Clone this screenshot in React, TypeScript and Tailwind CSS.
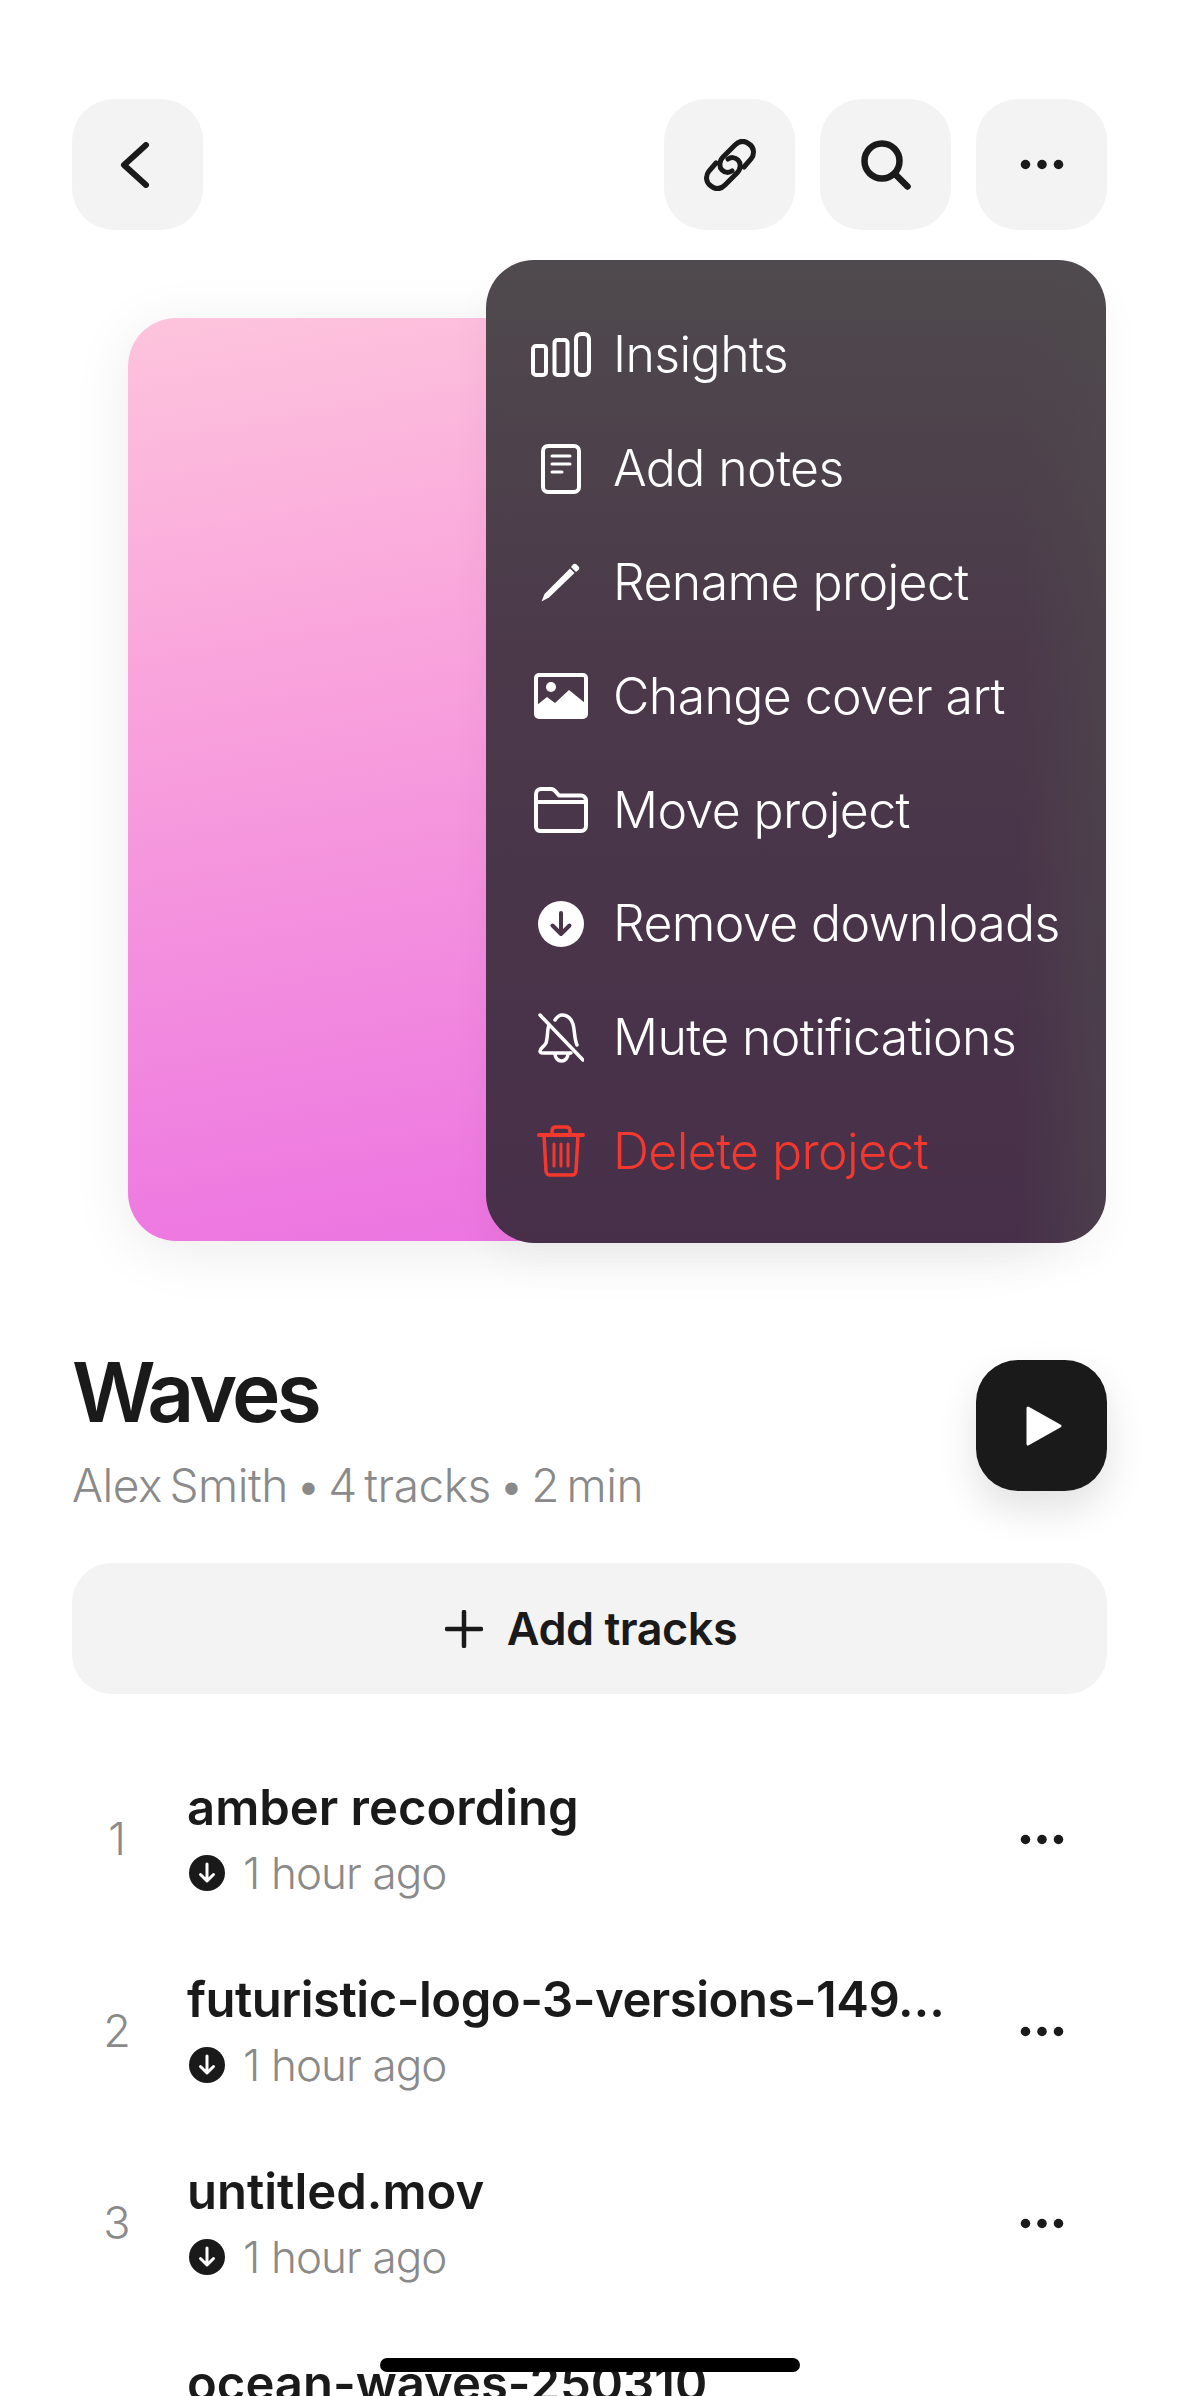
import type { ReactNode } from "react";

const Dots = ({ className = "" }: { className?: string }) => (
  <svg viewBox="0 0 48 12" className={className} fill="#1a1a1a">
    <circle cx="6" cy="6" r="5.2" />
    <circle cx="24" cy="6" r="5.2" />
    <circle cx="42" cy="6" r="5.2" />
  </svg>
);

const IconButton = ({ children }: { children: ReactNode }) => (
  <button className="flex h-[131px] w-[131px] items-center justify-center rounded-[42px] bg-[#f3f3f3]">
    {children}
  </button>
);

const stroke = {
  fill: "none",
  stroke: "currentColor",
  strokeLinecap: "round" as const,
  strokeLinejoin: "round" as const,
};

const menuItems: { label: string; danger?: boolean; icon: ReactNode }[] = [
  {
    label: "Insights",
    icon: (
      <svg viewBox="0 0 60 45" className="h-[45px] w-[60px] text-white" {...stroke} strokeWidth="4">
        <rect x="2" y="14" width="13" height="29" rx="3" />
        <rect x="23.500" y="8" width="13" height="35" rx="3" />
        <rect x="45" y="2" width="13" height="41" rx="5" />
      </svg>
    ),
  },
  {
    label: "Add notes",
    icon: (
      <svg viewBox="0 0 40 50" className="h-[50px] w-[40px] text-white" {...stroke} strokeWidth="4">
        <rect x="2" y="2" width="36" height="46" rx="5" />
        <path d="M11 12h18M11 20h18M11 28h10" strokeWidth="3" />
      </svg>
    ),
  },
  {
    label: "Rename project",
    icon: (
      <svg viewBox="0 0 40 40" className="h-[40px] w-[40px] text-white" fill="currentColor">
        <path d="M29 6.500 33.500 11 8 35.500 0.500 39.500 3.500 32Z" />
        <path d="M32 2.500c1-1 2.500-1 3.500 0l2 2c1 1 1 2.500 0 3.500l-2.500 2-5-5Z" />
      </svg>
    ),
  },
  {
    label: "Change cover art",
    icon: (
      <svg viewBox="0 0 54 46" className="h-[46px] w-[54px] text-white">
        <rect x="0" y="0" width="54" height="46" rx="5" fill="currentColor" />
        <rect x="4" y="4" width="46" height="34" rx="1" fill="#4b374a" />
        <circle cx="17" cy="14" r="5" fill="currentColor" />
        <path d="M3 32 13 24 21 30 35 17 51 30V40H3Z" fill="currentColor" />
      </svg>
    ),
  },
  {
    label: "Move project",
    icon: (
      <svg viewBox="0 0 54 46" className="h-[46px] w-[54px] text-white" {...stroke} strokeWidth="4">
        <path d="M2 40V7a5 5 0 0 1 5-5h10c2.500 0 3.500 1 5 3l3 3.500h22a5 5 0 0 1 5 5V39a5 5 0 0 1-5 5H6a4 4 0 0 1-4-4Z" />
        <path d="M2 15h50" />
      </svg>
    ),
  },
  {
    label: "Remove downloads",
    icon: (
      <svg viewBox="0 0 46 46" className="h-[46px] w-[46px] text-white">
        <circle cx="23" cy="23" r="23" fill="currentColor" />
        <path
          d="M23 12v21M14.500 24.500 23 33l8.500-8.500"
          fill="none"
          stroke="#4a3549"
          strokeWidth="4"
          strokeLinecap="round"
          strokeLinejoin="round"
        />
      </svg>
    ),
  },
  {
    label: "Mute notifications",
    icon: (
      <svg viewBox="0 0 46 50" className="h-[50px] w-[46px] text-white" {...stroke} strokeWidth="3.500">
        <path d="M2 2 45 47" />
        <path d="M11 12C9 16 10 25 8 30 6 34 2 35 2 38c0 1.500 1 2 3 2h28" />
        <path d="M17 7c2-3 4-5 7-5 5 0 9 3 11 9 2 7 1 14 4 21" />
        <path d="M17 41c0 4 3 7 6.500 7s6.500-3 6.500-7" />
      </svg>
    ),
  },
  {
    label: "Delete project",
    danger: true,
    icon: (
      <svg viewBox="0 0 48 52" className="h-[52px] w-[48px] text-[#f5382e]" {...stroke} strokeWidth="3.500">
        <path d="M2 10h44" strokeWidth="4" />
        <path d="M15 10V6c0-2.500 1.500-4 4-4h10c2.500 0 4 1.500 4 4v4" />
        <path d="M7 10l2 36c0 2.500 2 4 4 4h22c2 0 4-1.500 4-4l2-36" />
        <path d="M17 19v22M24 19v22M31 19v22" strokeWidth="3" />
      </svg>
    ),
  },
];

const tracks = [
  { title: "amber recording", tight: false },
  { title: "futuristic-logo-3-versions-149…", tight: true },
  { title: "untitled.mov", tight: false },
  { title: "ocean-waves-250310", tight: false },
];

const Track = ({ index, title, tight }: { index: number; title: string; tight: boolean }) => (
  <div className="flex h-[192px] items-center">
    <span className="mr-[25px] mb-[2px] w-[90px] shrink-0 text-center text-[45px] font-light text-[#8a8a8a]">{index}</span>
    <div className="min-w-0 flex-1">
      <div className={`text-[49px] leading-[64px] font-semibold text-[#1a1a1a] whitespace-nowrap ${tight ? "tracking-[-0.5px]" : "tracking-[0px]"}`}>
        {title}
      </div>
      <div className="mt-[2px] flex items-center text-[44px] leading-[62px] font-light tracking-[-0.9px] text-[#8a8a8a]">
        <svg viewBox="0 0 36 36" className="mr-[18px] ml-[2px] h-[36px] w-[36px] shrink-0">
          <circle cx="18" cy="18" r="18" fill="#1a1a1a" />
          <path
            d="M18 9v17M11.500 19.500 18 26l6.500-6.500"
            fill="none"
            stroke="#fff"
            strokeWidth="3"
            strokeLinecap="round"
            strokeLinejoin="round"
          />
        </svg>
        1 hour ago
      </div>
    </div>
    <Dots className="mr-[43px] mb-[2px] h-[11px] w-[44px] shrink-0" />
  </div>
);

export default function App() {
  return (
    <div className="relative h-[2396px] w-[1179px] overflow-hidden bg-white font-['Inter',sans-serif]">
      <header className="flex items-center justify-between px-[72px] pt-[99px]">
        <IconButton>
          <svg viewBox="0 0 30 46" className="mr-[6px] h-[46px] w-[30px]" fill="none" stroke="#1a1a1a" strokeWidth="6" strokeLinecap="round" strokeLinejoin="round">
            <path d="M26 3 4 23l22 20" />
          </svg>
        </IconButton>
        <div className="flex gap-[25px]">
          <IconButton>
            <svg viewBox="0 0 52 52" className="h-[52px] w-[52px]" fill="none" stroke="#1a1a1a" strokeWidth="5" strokeLinecap="round">
              <path d="M40 28 47 20C51 15 50 8 45 5 40 1 35 2 31 6L19 18C15 22 15 28 18 31 21 34 25 34 28 32" />
              <path d="M12 24 5 32C1 37 2 44 7 47 12 51 17 50 21 46L33 34C37 30 37 24 34 21 31 18 27 18 24 20" />
            </svg>
          </IconButton>
          <IconButton>
            <svg viewBox="0 0 50 50" className="h-[50px] w-[50px]" fill="none" stroke="#1a1a1a" strokeWidth="6.500" strokeLinecap="round">
              <circle cx="21" cy="21" r="17.500" />
              <path d="m35 35 11.500 11.500" />
            </svg>
          </IconButton>
          <IconButton>
            <Dots className="h-[11px] w-[46px]" />
          </IconButton>
        </div>
      </header>

      <section className="px-[128px] pt-[88px]">
        <div className="h-[923px] w-[923px] rounded-[48px] bg-[linear-gradient(170deg,#fdc4dc_0%,#f9a3dc_35%,#ea6de2_100%)] shadow-[0_10px_60px_rgba(0,0,0,0.08)]" />
      </section>

      {/* Project actions popover */}
      <div className="absolute top-[260px] left-[486px] h-[983px] w-[620px] rounded-[48px] bg-[linear-gradient(to_left,rgba(79,74,77,0.55),rgba(79,74,77,0)_14%),linear-gradient(to_bottom,#4f4a4d,#4b394a_40%,#472f49)] pt-[38px] shadow-[0_20px_40px_rgba(0,0,0,0.04)]">
        {menuItems.map((item) => (
          <div key={item.label} className="flex h-[113.800px] items-center pl-[45px]">
            <div className="mr-[22px] flex w-[60px] shrink-0 justify-center">{item.icon}</div>
            <span className={`text-[50px] font-[350] tracking-[-0.6px] whitespace-nowrap ${item.danger ? "text-[#f5382e]" : "text-white"}`}>
              {item.label}
            </span>
          </div>
        ))}
      </div>

      <section className="relative mt-[102px] px-[72px]">
        <div className="flex items-start justify-between">
          <div>
            <h1 className="text-[82px] leading-[100px] font-semibold tracking-[-3.800px] text-[#1a1a1a]">Waves</h1>
            <p className="mt-[14px] text-[46px] leading-[56px] font-light tracking-[-0.45px] [word-spacing:-5px] text-[#8a8a8a]">
              Alex Smith • 4 tracks • 2 min
            </p>
          </div>
          <button className="mt-[17px] flex h-[131px] w-[131px] items-center justify-center rounded-[42px] bg-[#1a1a1a] shadow-[0_18px_40px_rgba(0,0,0,0.12)]">
            <svg viewBox="0 0 36 40" className="ml-[4px] h-[40px] w-[36px]" fill="#fff" stroke="#fff" strokeWidth="3" strokeLinejoin="round">
              <path d="M2 2 34 20 2 38Z" />
            </svg>
          </button>
        </div>
        <button className="mt-[50px] flex h-[131px] w-full items-center justify-center gap-[24px] rounded-[40px] bg-[#f3f3f3] pl-[3px] text-[45px] font-semibold tracking-[-0.5px] text-[#1a1a1a]">
          <svg viewBox="0 0 38 38" className="h-[38px] w-[38px]" fill="none" stroke="#1a1a1a" strokeWidth="4.500" strokeLinecap="round">
            <path d="M19 2v34M2 19h34" />
          </svg>
          Add tracks
        </button>
      </section>

      <section className="mt-[50px] px-[72px]">
        {tracks.map((t, i) => (
          <Track key={t.title} index={i + 1} title={t.title} tight={t.tight} />
        ))}
      </section>

      {/* iOS home indicator */}
      <div className="absolute top-[2358px] left-[380px] h-[14px] w-[420px] rounded-full bg-black" />
    </div>
  );
}
